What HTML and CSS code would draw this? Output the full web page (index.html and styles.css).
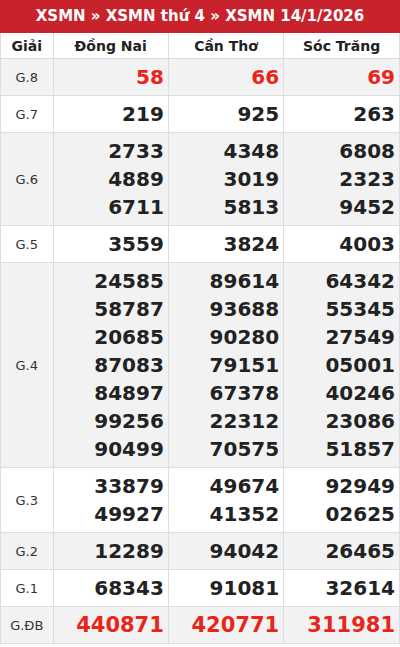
FILE: index.html
```html
<!DOCTYPE html>
<html lang="vi">
<head>
<meta charset="utf-8">
<link rel="stylesheet" href="styles.css">
</head>
<body>
<div class="box">
  <h2 class="title">XSMN » XSMN thứ 4 » XSMN 14/1/2026</h2>
  <table class="kq">
    <colgroup>
      <col class="c-label"><col class="c-prov"><col class="c-prov"><col class="c-prov">
    </colgroup>
    <thead>
      <tr><th>Giải</th><th>Đồng Nai</th><th>Cần Thơ</th><th>Sóc Trăng</th></tr>
    </thead>
    <tbody>
      <tr class="alt"><td class="lbl">G.8</td><td class="num red">58</td><td class="num red">66</td><td class="num red">69</td></tr>
      <tr><td class="lbl">G.7</td><td class="num">219</td><td class="num">925</td><td class="num">263</td></tr>
      <tr class="alt"><td class="lbl">G.6</td>
        <td class="num"><div>2733</div><div>4889</div><div>6711</div></td>
        <td class="num"><div>4348</div><div>3019</div><div>5813</div></td>
        <td class="num"><div>6808</div><div>2323</div><div>9452</div></td></tr>
      <tr><td class="lbl">G.5</td><td class="num">3559</td><td class="num">3824</td><td class="num">4003</td></tr>
      <tr class="alt"><td class="lbl">G.4</td>
        <td class="num"><div>24585</div><div>58787</div><div>20685</div><div>87083</div><div>84897</div><div>99256</div><div>90499</div></td>
        <td class="num"><div>89614</div><div>93688</div><div>90280</div><div>79151</div><div>67378</div><div>22312</div><div>70575</div></td>
        <td class="num"><div>64342</div><div>55345</div><div>27549</div><div>05001</div><div>40246</div><div>23086</div><div>51857</div></td></tr>
      <tr><td class="lbl">G.3</td>
        <td class="num"><div>33879</div><div>49927</div></td>
        <td class="num"><div>49674</div><div>41352</div></td>
        <td class="num"><div>92949</div><div>02625</div></td></tr>
      <tr class="alt"><td class="lbl">G.2</td><td class="num">12289</td><td class="num">94042</td><td class="num">26465</td></tr>
      <tr><td class="lbl">G.1</td><td class="num">68343</td><td class="num">91081</td><td class="num">32614</td></tr>
      <tr class="alt"><td class="lbl">G.ĐB</td><td class="num red big">440871</td><td class="num red big">420771</td><td class="num red big">311981</td></tr>
    </tbody>
  </table>
</div>
</body>
</html>
```
FILE: styles.css
```css
html, body {
  margin: 0;
  padding: 0;
  background: #ffffff;
}
body {
  font-family: "DejaVu Sans", sans-serif;
  color: #222222;
}
.box {
  width: 400px;
  border-left: 1px solid #dcdde2;
  border-right: 1px solid #dcdde2;
  border-bottom: 1px solid #dcdde2;
  box-sizing: border-box;
}
.title {
  margin: 0 -1px;
  height: 33px;
  line-height: 32px;
  background: #c8232c;
  color: #ffffff;
  font-size: 15px;
  font-weight: bold;
  text-align: center;
}
.kq {
  width: 100%;
  border-collapse: collapse;
  table-layout: fixed;
}
.c-label { width: 52px; }
.kq th, .kq td {
  border: 1px solid #dcdde2;
  padding: 0 4px;
}
.kq tr > :first-child { border-left: none; }
.kq tr > :last-child { border-right: none; }
.kq tbody tr:last-child td { border-bottom: none; }
.kq thead th {
  border-top: none;
  height: 25px;
  font-size: 14px;
  font-weight: bold;
  color: #222222;
  text-align: center;
  padding: 0;
}
.kq tr.alt td { background: #f2f2f2; }
.lbl {
  text-align: center;
  font-size: 13px;
  color: #333333;
}
.num {
  text-align: right;
  font-size: 20px;
  font-weight: bold;
  line-height: 28px;
  padding-top: 4px !important;
  padding-bottom: 4px !important;
  color: #222222;
}
.num.red { color: #e8241b; }
.num.big { font-size: 21px; }
```
